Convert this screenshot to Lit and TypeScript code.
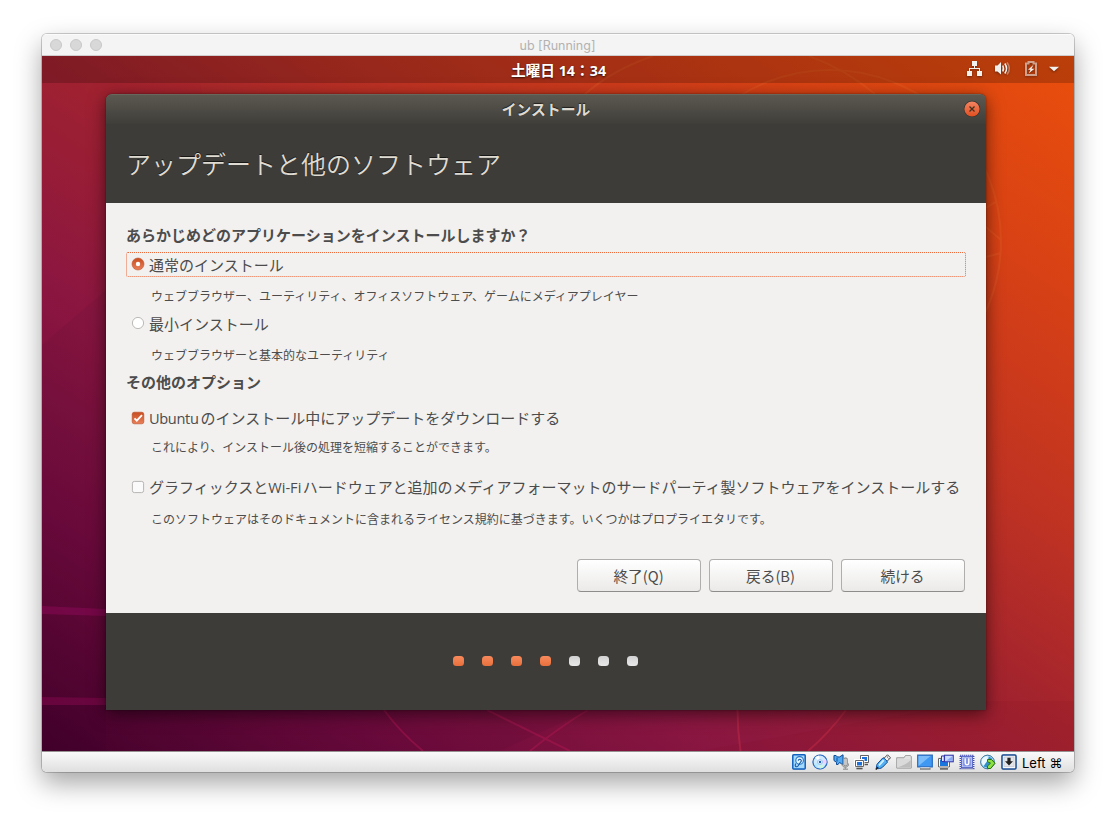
import { LitElement, html, svg, css } from "lit";
import { customElement, property } from "lit/decorators.js";
import { classMap } from "lit/directives/class-map.js";

const statusIcons = [
  // hard disk
  svg`<rect x="1.8" y=".8" width="12.4" height="14.2" rx="1" fill="#a5daff" stroke="#1062c0" stroke-width="1.5"/><circle cx="8.6" cy="6.400" r="3.800" fill="#e6f6ff" stroke="#2474c8" stroke-width="1.100"/><path d="M4.800 9.500c-1.600 2.800.6 4.300 2.200 2.500L9.800 7.800M7.300 6.800a1.500 1.500 0 1 1 2.400 1.200" fill="none" stroke="#1558a8" stroke-width="1.100"/>`,
  // optical disc
  svg`<circle cx="8" cy="8" r="7" fill="#cfeaff" stroke="#2a6cc8" stroke-width="1.2"/><path d="M8 8 3 3.500A7 7 0 0 1 7 1.500z" fill="#fff"/><path d="M8 8l6-3a7 7 0 0 1 0 5z" fill="#f1cfff"/><path d="M8 8l-6 2a7 7 0 0 0 3 4z" fill="#b5e8ff"/><path d="M8 8l4 5a7 7 0 0 1-4 1.500z" fill="#c9f5df"/><circle cx="8" cy="8" r="2.400" fill="#fff" stroke="#7fb2ee" stroke-width=".8"/><circle cx="8" cy="8" r="1.200" fill="#1760c0"/>`,
  // audio
  svg`<path d="M1 1.500h2l1.500 1.500h2L10 .8v9.700L6.500 8.500 5 10.500H3.500V8.300L1 6.500z" fill="#55a9ef" stroke="#0f4f9c"/><path d="M4 3.500v4" stroke="#0f4f9c"/><rect x="10.500" y="4" width="4" height="8" rx="1.800" fill="#b5b5b5" stroke="#8c8c8c"/><path d="M10.500 6h4m-4 2h4m-4 2h4" stroke="#eee" stroke-width=".6"/><path d="M8.800 9.500c0 5 7 5 7 0M12.400 13v2M10 15.200h5" fill="none" stroke="#999"/>`,
  // network
  svg`<path d="M6.500 1.500h8v7h-8z" fill="#fff" stroke="#666"/><path d="M8 3h5v4H8z" fill="#1c72dd"/><path d="M10 10.500h4" fill="none" stroke="#555" stroke-width="1.300"/><path d="M1 6h8.500v6.500H1z" fill="#fff" stroke="#fff" stroke-width="2"/><path d="M1.500 6.500h8v6h-8z" fill="#fff" stroke="#666"/><path d="M3 8h5v3.500H3z" fill="#1c72dd"/><path d="M2.500 14.500h6" stroke="#555" stroke-width="1.500"/>`,
  // usb
  svg`<path d="M9 4.300 12.500.8l3 3L12 7.300z" fill="#f4f4f4" stroke="#555"/><path d="M12.200 2.800l.8.800M13.500 4.200l.5.500" stroke="#333"/><path d="M1.500 14.500c-.4-2 .3-4.200 1.400-5.300L8 3.800c1.800.6 3.800 2.500 4.300 4.500L7.500 13.200c-1.500 1.300-4 1.700-6 1.300z" fill="#53b0f4" stroke="#114f9c"/><path d="M3.500 10.500 8 5.500l1.500 1.200-5.100 5.500z" fill="#d3f0ff"/><path d="M.8 15.500l2.300-2.400" stroke="#222" stroke-width="1.400"/>`,
  // shared folder
  svg`<path d="M8 3.800 9.500 1.500h4.800l1 1.300V14H.7V3.800z" fill="#e2e2e2" stroke="#a5a5a5"/><path d="M1.300 5h13.400v8.500H1.300z" fill="#dadada"/><path d="M1.300 13.500C7 12 12 9 14.700 6v7.500z" fill="#bdbdbd"/>`,
  // display
  svg`<rect x=".7" y="1.200" width="14.600" height="11.600" fill="#3f98f2" stroke="#2a6fc4" stroke-width="1.200"/><path d="M1.500 12V2h12z" fill="#7cbcf9"/><path d="M3 14.900h10.500" stroke="#666" stroke-width="1.200"/><path d="M3.500 13.800h9" stroke="#fff" stroke-width=".7"/>`,
  // recording
  svg`<path d="M1 4.500h10v8.500H1z" fill="#1976dd" stroke="#fff" stroke-width="2"/><path d="M.5 4.500h11V13H.5z" fill="none" stroke="#666"/><path d="M2 14.900h8" stroke="#555" stroke-width="1.300"/><path d="M3.500 2h2.800v5.500H3.500z" fill="#e8eaff" stroke="#3438b0"/><path d="M6.500 1.200h8.700v6.600H6.500z" fill="#c9dbff" stroke="#3438b0" stroke-width="1.100"/><path d="M8 6.800 14 2.500v4.300z" fill="#86abf6"/>`,
  // processor
  svg`<rect x="1.300" y="1.300" width="13.400" height="13.400" fill="none" stroke="#3c49b8" stroke-width="1.300" stroke-dasharray="1 1"/><rect x="2.400" y="2.400" width="11.200" height="11.200" fill="#b4c0f6" stroke="#4a59c0" stroke-width=".8"/><rect x="4" y="3.700" width="8" height="8.600" rx="1.500" fill="#8797e6"/><path d="M6.200 4.200v4.800c0 2.400 3.600 2.400 3.600 0V4.200" fill="none" stroke="#fff" stroke-width="1.400"/>`,
  // mouse integration
  svg`<circle cx="7.500" cy="8" r="6.800" fill="#a5daf7" stroke="#3d7ba3"/><path d="M1.800 5.500Q4 2 7.500 2L8 6l-4 6-2.500-3z" fill="#e9f8ff"/><path d="M3.500 12.500c2-4 4-4 5.500-10l3 2-2 7-3 2z" fill="#338fcb"/><path d="M7.500 5.500h4L15 9.200l-4.300 5.300H7.500V12l3-2.800-3-1.500z" fill="#8be042" stroke="#28720f"/>`,
  // host key
  svg`<rect x="1" y="1" width="14" height="14" rx="1.200" fill="#f8f8f8" stroke="#1c5098" stroke-width="1.500"/><rect x="3" y="3" width="10" height="9.500" fill="#e4e6ea" stroke="#bcc6d4" stroke-width=".7"/><path d="M6.400 3.800h3.200v3.500H12L8 11.500 4 7.300h2.400z" fill="#222"/>`,
];

@customElement("choice-row")
class ChoiceRow extends LitElement {
  @property() kind = "radio";
  @property({ type: Boolean }) checked = false;
  @property({ type: Boolean }) focused = false;

  static styles = css`
    :host { display: block; }
    .row { box-sizing: border-box; height: 25px; display: flex; align-items: center; gap: 5px; padding: 0 6px; }
    .focus { padding: 0 5px; border: 1px dotted #ee6a3c; border-radius: 2px; }
    .mark { width: 12px; height: 12px; flex: none; overflow: visible; margin-top: -1px; }
    .label { font-size: 15px; line-height: 24px; height: 24px; white-space: nowrap; }
    .check-label { height: 26px; }
  `;

  mark() {
    if (this.kind === "radio") {
      return this.checked
        ? svg`<circle cx="6" cy="6" r="6" fill="url(#on)" stroke="#c2532d" stroke-width=".6"/><circle cx="6" cy="6" r="2.200" fill="#fff"/>`
        : svg`<circle cx="6" cy="6" r="5.600" fill="#fff" stroke="#b5b3b0" stroke-width=".9"/>`;
    }
    return this.checked
      ? svg`<rect x=".2" y=".2" width="11.600" height="11.600" rx="2" fill="url(#on)" stroke="#b94a24" stroke-width=".6"/><path d="M2.500 6.300 4.800 8.700 10 3.200" fill="none" stroke="#fff" stroke-width="1.800"/>`
      : svg`<rect x=".4" y=".4" width="11.200" height="11.200" rx="2" fill="#fafafa" stroke="#b0aeab" stroke-width=".9"/>`;
  }

  render() {
    return html`<div class=${classMap({ row: true, focus: this.focused })}>
      <svg class="mark" viewBox="0 0 12 12">
        <defs><linearGradient id="on" x1="0" y1="0" x2="0" y2="1"><stop stop-color="#c74d20"/><stop offset="1" stop-color="#e9805a"/></linearGradient></defs>
        ${this.mark()}
      </svg>
      <span class=${classMap({ label: true, "check-label": this.kind === "check" })}><slot></slot></span>
    </div>`;
  }
}

@customElement("app-root")
class AppRoot extends LitElement {
  private steps = [true, true, true, true, false, false, false];
  private buttons = ["終了(Q)", "戻る(B)", "続ける"];

  static styles = css`
    :host { display: block; box-sizing: border-box; width: 1116px; height: 822px; padding: 34px 42px 0; background: #fff; overflow: hidden;
      font-family: "Noto Sans CJK JP", "Noto Sans", sans-serif; }
    .vm { width: 1032px; height: 738px; border-radius: 5px; display: flex; flex-direction: column; overflow: hidden;
      box-shadow: 0 0 0 1px rgba(0,0,0,.19), 0 11px 27px rgba(0,0,0,.36); }
    .titlebar { box-sizing: border-box; height: 22px; flex: none; background: #f4f4f4; border-bottom: 1px solid #cfcdcd; border-top: 1px solid #fbfbfb;
      display: grid; grid-template-columns: 1fr auto 1fr; align-items: center; padding: 0 9px 0 8px; }
    .lights { display: flex; gap: 8px; }
    .light { box-sizing: border-box; width: 12px; height: 12px; border-radius: 50%; background: #d8d8d8; border: 1px solid #c8c8c8; }
    .vm-name { font: 12.500px/22px "Inter", sans-serif; color: #b2b2b2; height: 20px; }
    .desktop { position: relative; height: 695px; flex: none; display: flex; flex-direction: column; align-items: flex-start;
      background: linear-gradient(to top right, #45022b 0%, #6c0a3c 17%, #8b1740 34%, #a2232e 51%, #c03322 66%, #d94214 84%, #ea4f0c 100%); }
    .wallpaper { position: absolute; inset: 0; width: 1032px; height: 695px; }
    .panel { position: relative; box-sizing: border-box; width: 100%; height: 27px; flex: none; background: rgba(0,0,0,.2);
      display: grid; grid-template-columns: 1fr auto 1fr; align-items: center; padding: 0 13px 0 14px; }
    .clock { color: #fff; font-weight: 700; font-size: 14.700px; line-height: 28px; height: 27px; white-space: pre; text-shadow: 0 1px 2px rgba(0,0,0,.7); }
    .latin-bold { font-family: "Noto Sans", sans-serif; font-size: 14.300px; }
    .tray { display: flex; justify-content: flex-end; align-items: center; height: 25px; align-self: start; filter: drop-shadow(0 1px 1px rgba(0,0,0,.4)); }
    .tray-icons { width: 96px; height: 18px; }
    .dialog { position: relative; width: 880px; height: 616px; margin: 11px 0 0 64px; display: flex; flex-direction: column;
      border-radius: 6px 6px 0 0; background: #3d3c38; box-shadow: 0 4px 17px rgba(0,0,0,.55), 0 0 2px rgba(0,0,0,.45); }
    .dialog-bar { box-sizing: border-box; height: 30px; flex: none; border-radius: 6px 6px 0 0; background: linear-gradient(#5b5850, #3f3e39);
      border-top: 1px solid #69665e; display: grid; grid-template-columns: 1fr auto 1fr; align-items: start; padding: 0 6px; }
    .dialog-title { color: #dfdbd2; font-weight: 700; font-size: 14.800px; line-height: 28px; text-shadow: 0 -1px 1px rgba(0,0,0,.6); }
    .close { width: 16px; height: 16px; margin-top: 6px; justify-self: end; overflow: visible; }
    .heading { margin: 0; box-sizing: border-box; height: 79px; flex: none; padding: 0 20px 0; font-size: 25px; font-weight: 350; line-height: 78px;
      color: #dfdbd2; text-shadow: 0 -1px 0 rgba(0,0,0,.6); }
    .body { box-sizing: border-box; height: 410px; flex: none; background: #f2f1ef; color: #4c4c4c; padding: 20px 20px 0; display: flex; flex-direction: column; }
    .question { margin: 0 0 4px; height: 25px; font-size: 15px; font-weight: 700; line-height: 24px; }
    .options { margin: 3px 0 11px; height: 25px; font-size: 15px; font-weight: 700; line-height: 24px; }
    .hint { height: 24px; margin: 7px 0 3px; padding-left: 25px; font-size: 12px; line-height: 23px; white-space: nowrap; }
    .hint-below { margin: 7px 0 0; }
    .hint-wide { margin: 4px 0 16px; }
    .hint-last { margin: 7px 0 28px; }
    .latin { font-family: "Open Sans", "Noto Sans", sans-serif; display: inline-block; white-space: pre; font-size: 14.600px; line-height: 20px; letter-spacing: -.35px; }
    .ubuntu { width: 51.500px; }
    .wifi { width: 34.500px; letter-spacing: 0; }
    .actions { display: flex; justify-content: flex-end; gap: 8px; padding-right: 1px; }
    .action { box-sizing: border-box; width: 124px; height: 33px; border: 1px solid #b0aeac; border-bottom-color: #8e8d8b; border-radius: 4px;
      background: linear-gradient(#fff, #ebeae8); color: #4c4c4c; font: 14.700px/32px "Noto Sans CJK JP", sans-serif; padding: 0 1px 1px 0; text-align: center; }
    .steps { height: 97px; display: flex; align-items: center; justify-content: center; gap: 18px; padding: 0 1px 2px 0; box-sizing: border-box; }
    .step { width: 11px; height: 10px; border-radius: 3.500px; background: linear-gradient(#d2d2d2, #e9e9e9); }
    .done { background: linear-gradient(#f88a5c, #e8703d); }
    .status { box-sizing: border-box; height: 21px; flex: none; border-top: 1px solid #969292; background: linear-gradient(#fafafa, #dfdfdf);
      display: flex; align-items: center; justify-content: flex-end; gap: 5px; padding: 0 12px 1px 0; }
    .status-icon { width: 16px; height: 16px; flex: none; filter: drop-shadow(0 .5px .5px rgba(0,0,0,.25)); }
    .hostkey { font: 13px/22px "Inter", sans-serif; height: 20px; color: #000; white-space: pre; width: 40px; }
    .command { font: 13px/20px "DejaVu Sans", sans-serif; }
  `;

  wallpaper() {
    return html`<svg class="wallpaper" viewBox="42 56 1032 695">
      <path d="M42 83 42 345 220 190 200 83z" fill="#a01048" opacity=".06"/>
      <path d="M42 345 106 290V751H42z" fill="#280020" opacity=".06"/>
      <path d="M42 705H600L500 751H42z" fill="#25001c" opacity=".06"/>
      <path d="M42 606 106 609V616L42 614z" fill="#93085e" opacity=".45"/>
      <path d="M42 697 106 698V705H42z" fill="#8b0852" opacity=".45"/>
      <path d="M980 701h94v50H700z" fill="#820d19" opacity=".1"/>
      <g fill="none" stroke="#b81855" stroke-width="2" opacity=".4">
        <path d="M384 710q17 23 39 41M487 710l83 41M588 710q-30 18-58 41"/>
      </g>
      <g fill="none" stroke="#cf3048" stroke-width="2" opacity=".4"><path d="M737.500 710q0 20 3 41M846 710q-17 23-38 41"/></g>
      <g fill="none" stroke="#ed7b36" stroke-width="2" opacity=".18">
        <circle cx="830" cy="241" r="171"/>
        <path d="M584 95q28-25 69-39M809 56q36 13 66 38M986 208l11-7M986 227l15 13M986 257l15-4"/>
      </g>
    </svg>`;
  }

  trayIcons() {
    return html`<svg class="tray-icons" viewBox="0 0 96 18">
      <g fill="#f2f0ec"><path d="M7 1h5v5H7zM2 11h5v5H2zM12 11h5v5h-5z"/><path d="M9 6h1v2h5v3h-1V9H5v2H4V8h5z"/>
        <path d="M30 5.500h2.500L36 2v12.500L32.500 11.500H30z"/><path d="M84 6.800h10l-5 4.500z"/><path d="M68.500 4.800 63 9.800h2.500L63.800 13.200 69.500 8.800H66.500z"/></g>
      <g fill="none" stroke="#f2f0ec" stroke-width="1.600"><path d="M37.800 5.500q1.300 3 0 6M39.800 3.500q3.500 5 0 10"/><path d="M42 2.500q4.700 6 0 12" opacity=".4"/></g>
      <path d="M61 3.500h2.500V2h5v1.500H71V15H61z" fill="none" stroke="#e2c5b8" stroke-width="2" opacity=".75"/>
    </svg>`;
  }

  render() {
    return html`<div class="vm">
      <div class="titlebar">
        <div class="lights"><span class="light"></span><span class="light"></span><span class="light"></span></div>
        <span class="vm-name">ub [Running]</span><span></span>
      </div>
      <div class="desktop">
        ${this.wallpaper()}
        <div class="panel"><span></span><span class="clock">土曜日<span class="latin-bold"> 14</span>：<span class="latin-bold">34</span></span><div class="tray">${this.trayIcons()}</div></div>
        <section class="dialog">
          <div class="dialog-bar"><span></span><span class="dialog-title">インストール</span>
            <svg class="close" viewBox="0 0 16 16"><defs><linearGradient id="close" x1="0" y1="0" x2="0" y2="1"><stop stop-color="#f58562"/><stop offset="1" stop-color="#e04f20"/></linearGradient></defs>
              <circle cx="8" cy="8" r="8.300" fill="#35342f"/><circle cx="8" cy="8" r="7.600" fill="url(#close)"/><path d="M5.500 5.500l5 5m0-5-5 5" stroke="#43301f" stroke-width="1.300"/></svg>
          </div>
          <h1 class="heading">アップデートと他のソフトウェア</h1>
          <div class="body">
            <h2 class="question">あらかじめどのアプリケーションをインストールしますか？</h2>
            <choice-row checked focused>通常のインストール</choice-row>
            <div class="hint">ウェブブラウザー、ユーティリティ、オフィスソフトウェア、ゲームにメディアプレイヤー</div>
            <choice-row>最小インストール</choice-row>
            <div class="hint hint-below">ウェブブラウザーと基本的なユーティリティ</div>
            <h2 class="options">その他のオプション</h2>
            <choice-row kind="check" checked><span class="latin ubuntu">Ubuntu </span>のインストール中にアップデートをダウンロードする</choice-row>
            <div class="hint hint-wide">これにより、インストール後の処理を短縮することができます。</div>
            <choice-row kind="check">グラフィックスと<span class="latin wifi">Wi-Fi</span>ハードウェアと追加のメディアフォーマットのサードパーティ製ソフトウェアをインストールする</choice-row>
            <div class="hint hint-last">このソフトウェアはそのドキュメントに含まれるライセンス規約に基づきます。いくつかはプロプライエタリです。</div>
            <div class="actions">${this.buttons.map((b) => html`<button class="action">${b}</button>`)}</div>
          </div>
          <div class="steps">${this.steps.map((d) => html`<span class=${classMap({ step: true, done: d })}></span>`)}</div>
        </section>
      </div>
      <div class="status">
        ${statusIcons.map((i) => html`<svg class="status-icon" viewBox="0 0 16 16">${i}</svg>`)}
        <span class="hostkey">Left <span class="command">⌘</span></span>
      </div>
    </div>`;
  }
}
